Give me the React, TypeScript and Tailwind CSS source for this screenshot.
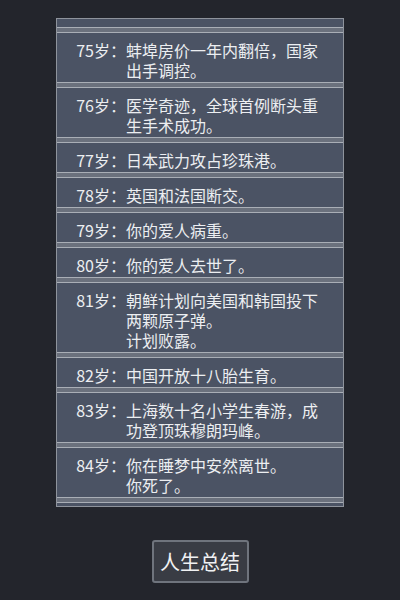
import React from "react";

const items: { age: number; lines: string[] }[] = [
  { age: 75, lines: ["蚌埠房价一年内翻倍，国家出手调控。"] },
  { age: 76, lines: ["医学奇迹，全球首例断头重生手术成功。"] },
  { age: 77, lines: ["日本武力攻占珍珠港。"] },
  { age: 78, lines: ["英国和法国断交。"] },
  { age: 79, lines: ["你的爱人病重。"] },
  { age: 80, lines: ["你的爱人去世了。"] },
  { age: 81, lines: ["朝鲜计划向美国和韩国投下两颗原子弹。", "计划败露。"] },
  { age: 82, lines: ["中国开放十八胎生育。"] },
  { age: 83, lines: ["上海数十名小学生春游，成功登顶珠穆朗玛峰。"] },
  { age: 84, lines: ["你在睡梦中安然离世。", "你死了。"] },
];

function Sep() {
  return (
    <div className="flex flex-col">
      <div className="h-px bg-[#a9aeb6]" />
      <div className="h-[4px] bg-[#6b717d]" />
      <div className="h-px bg-[#a9aeb6]" />
    </div>
  );
}

export default function App() {
  return (
    <div
      className="w-[400px] h-[600px] bg-[#23252c] flex flex-col items-center text-[#eceef1]"
      style={{ fontFamily: '"Noto Sans CJK SC", "Noto Sans", sans-serif' }}
    >
      <div className="mt-[18px] w-[288px] border border-[#8e939c] bg-[#4b5364] flex flex-col">
        <div className="h-[8px]" />
        {items.map((it) => (
          <React.Fragment key={it.age}>
            <Sep />
            <div className="flex pt-[7px] pb-[2px] text-[16px] leading-[20px]">
              <div className="w-[69px] text-right shrink-0 whitespace-nowrap">{it.age}岁：</div>
              <div className="w-[198px] flex flex-col">
                {it.lines.map((l, i) => (
                  <div key={i}>{l}</div>
                ))}
              </div>
            </div>
          </React.Fragment>
        ))}
        <Sep />
        <div className="h-[3px]" />
      </div>
      <div className="mt-[33px] w-[97px] h-[43px] rounded-[3px] border-2 border-[#6f747d] bg-[#393c44] flex items-center justify-center text-[20px] text-[#f0f1f3]">
        人生总结
      </div>
    </div>
  );
}
